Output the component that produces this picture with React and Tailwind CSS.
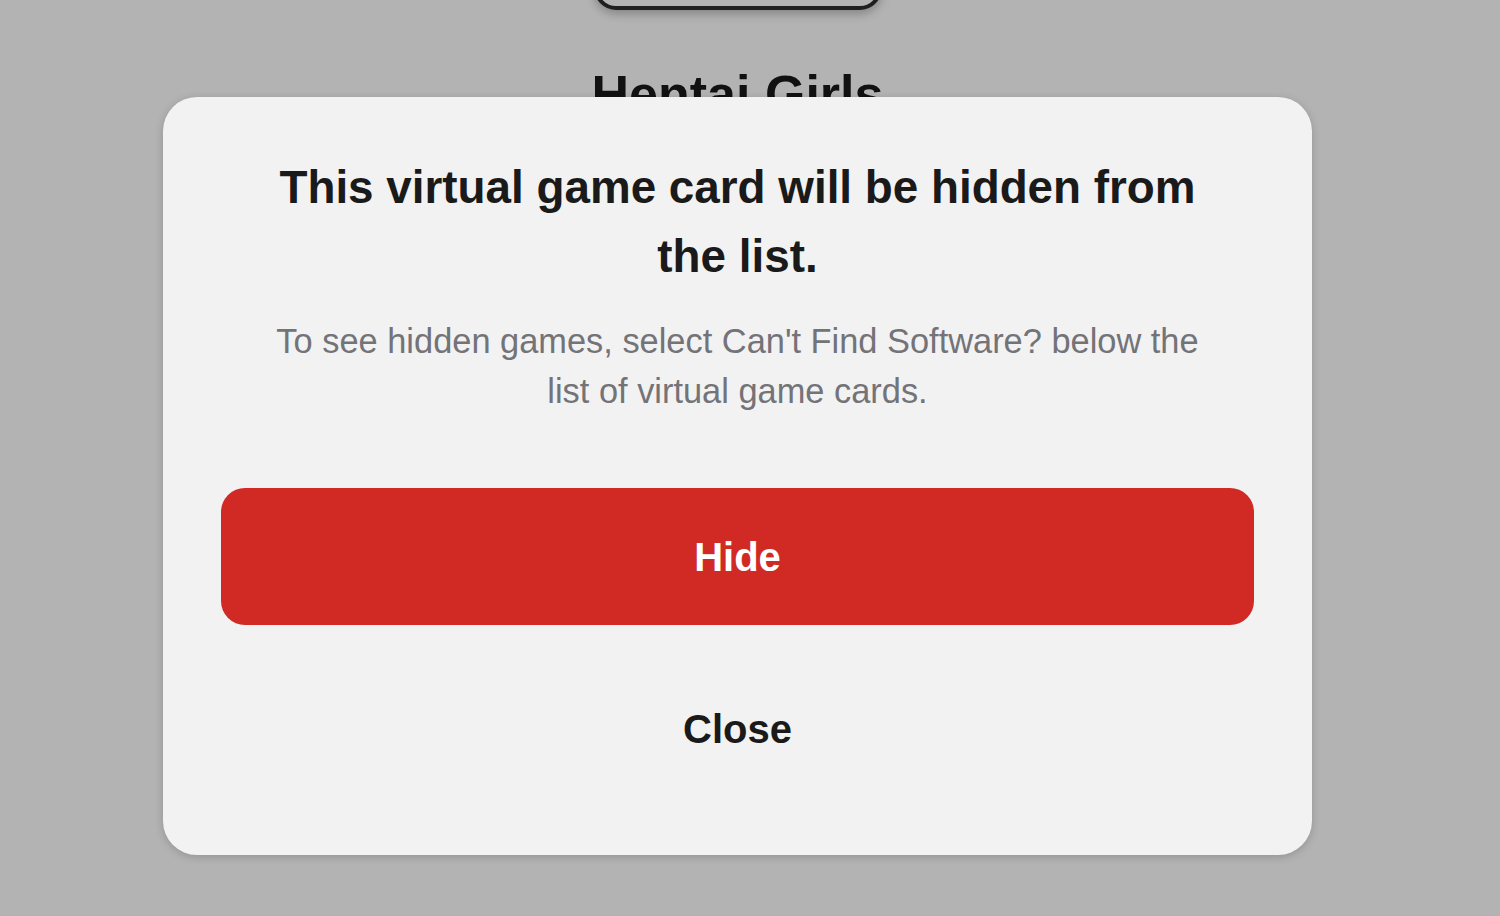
export default function App() {
  const font = { fontFamily: '"Liberation Sans", Arial, sans-serif' };

  return (
    <div className="relative h-[916px] w-[1500px] overflow-hidden bg-[#b3b3b3]" style={font}>
      {/* page behind the dialog */}
      <div className="flex w-[1475px] flex-col items-center">
        <div className="-mt-[190px] h-[200px] w-[288px] rounded-[22px] border-4 border-[#1f1f1f] shadow-[0_4px_10px_rgba(0,0,0,0.25)]" />
        <p className="mt-[54px] text-[52px] font-bold leading-[60px] text-[#111]">Hentai Girls</p>
      </div>

      {/* dialog */}
      <div className="absolute inset-0 flex items-start pl-[163px] pt-[97px]">
        <div className="flex w-[1149px] flex-col items-center rounded-[34px] bg-[#f2f2f2] px-[58px] pt-[56px] pb-[58px] shadow-[0_2px_8px_rgba(0,0,0,0.18)]">
          <div className="w-[960px] text-center">
            <h2 className="text-[45.8px] font-bold leading-[69px] text-[#1a1a1a]">
              This virtual game card will be hidden from the list.
            </h2>
            <p className="mt-[25px] text-[34.4px] leading-[50px] text-[#737378]">
              To see hidden games, select Can't Find Software? below the list of virtual game cards.
            </p>
          </div>

          <button className="mt-[72px] flex h-[137px] w-full items-center justify-center rounded-[24px] bg-[#d12a25] text-[40px] font-bold text-white">
            Hide
          </button>

          <button className="mt-[35px] flex h-[137px] w-full items-center justify-center text-[40px] font-bold text-[#1a1a1a]">
            Close
          </button>
        </div>
      </div>
    </div>
  );
}
